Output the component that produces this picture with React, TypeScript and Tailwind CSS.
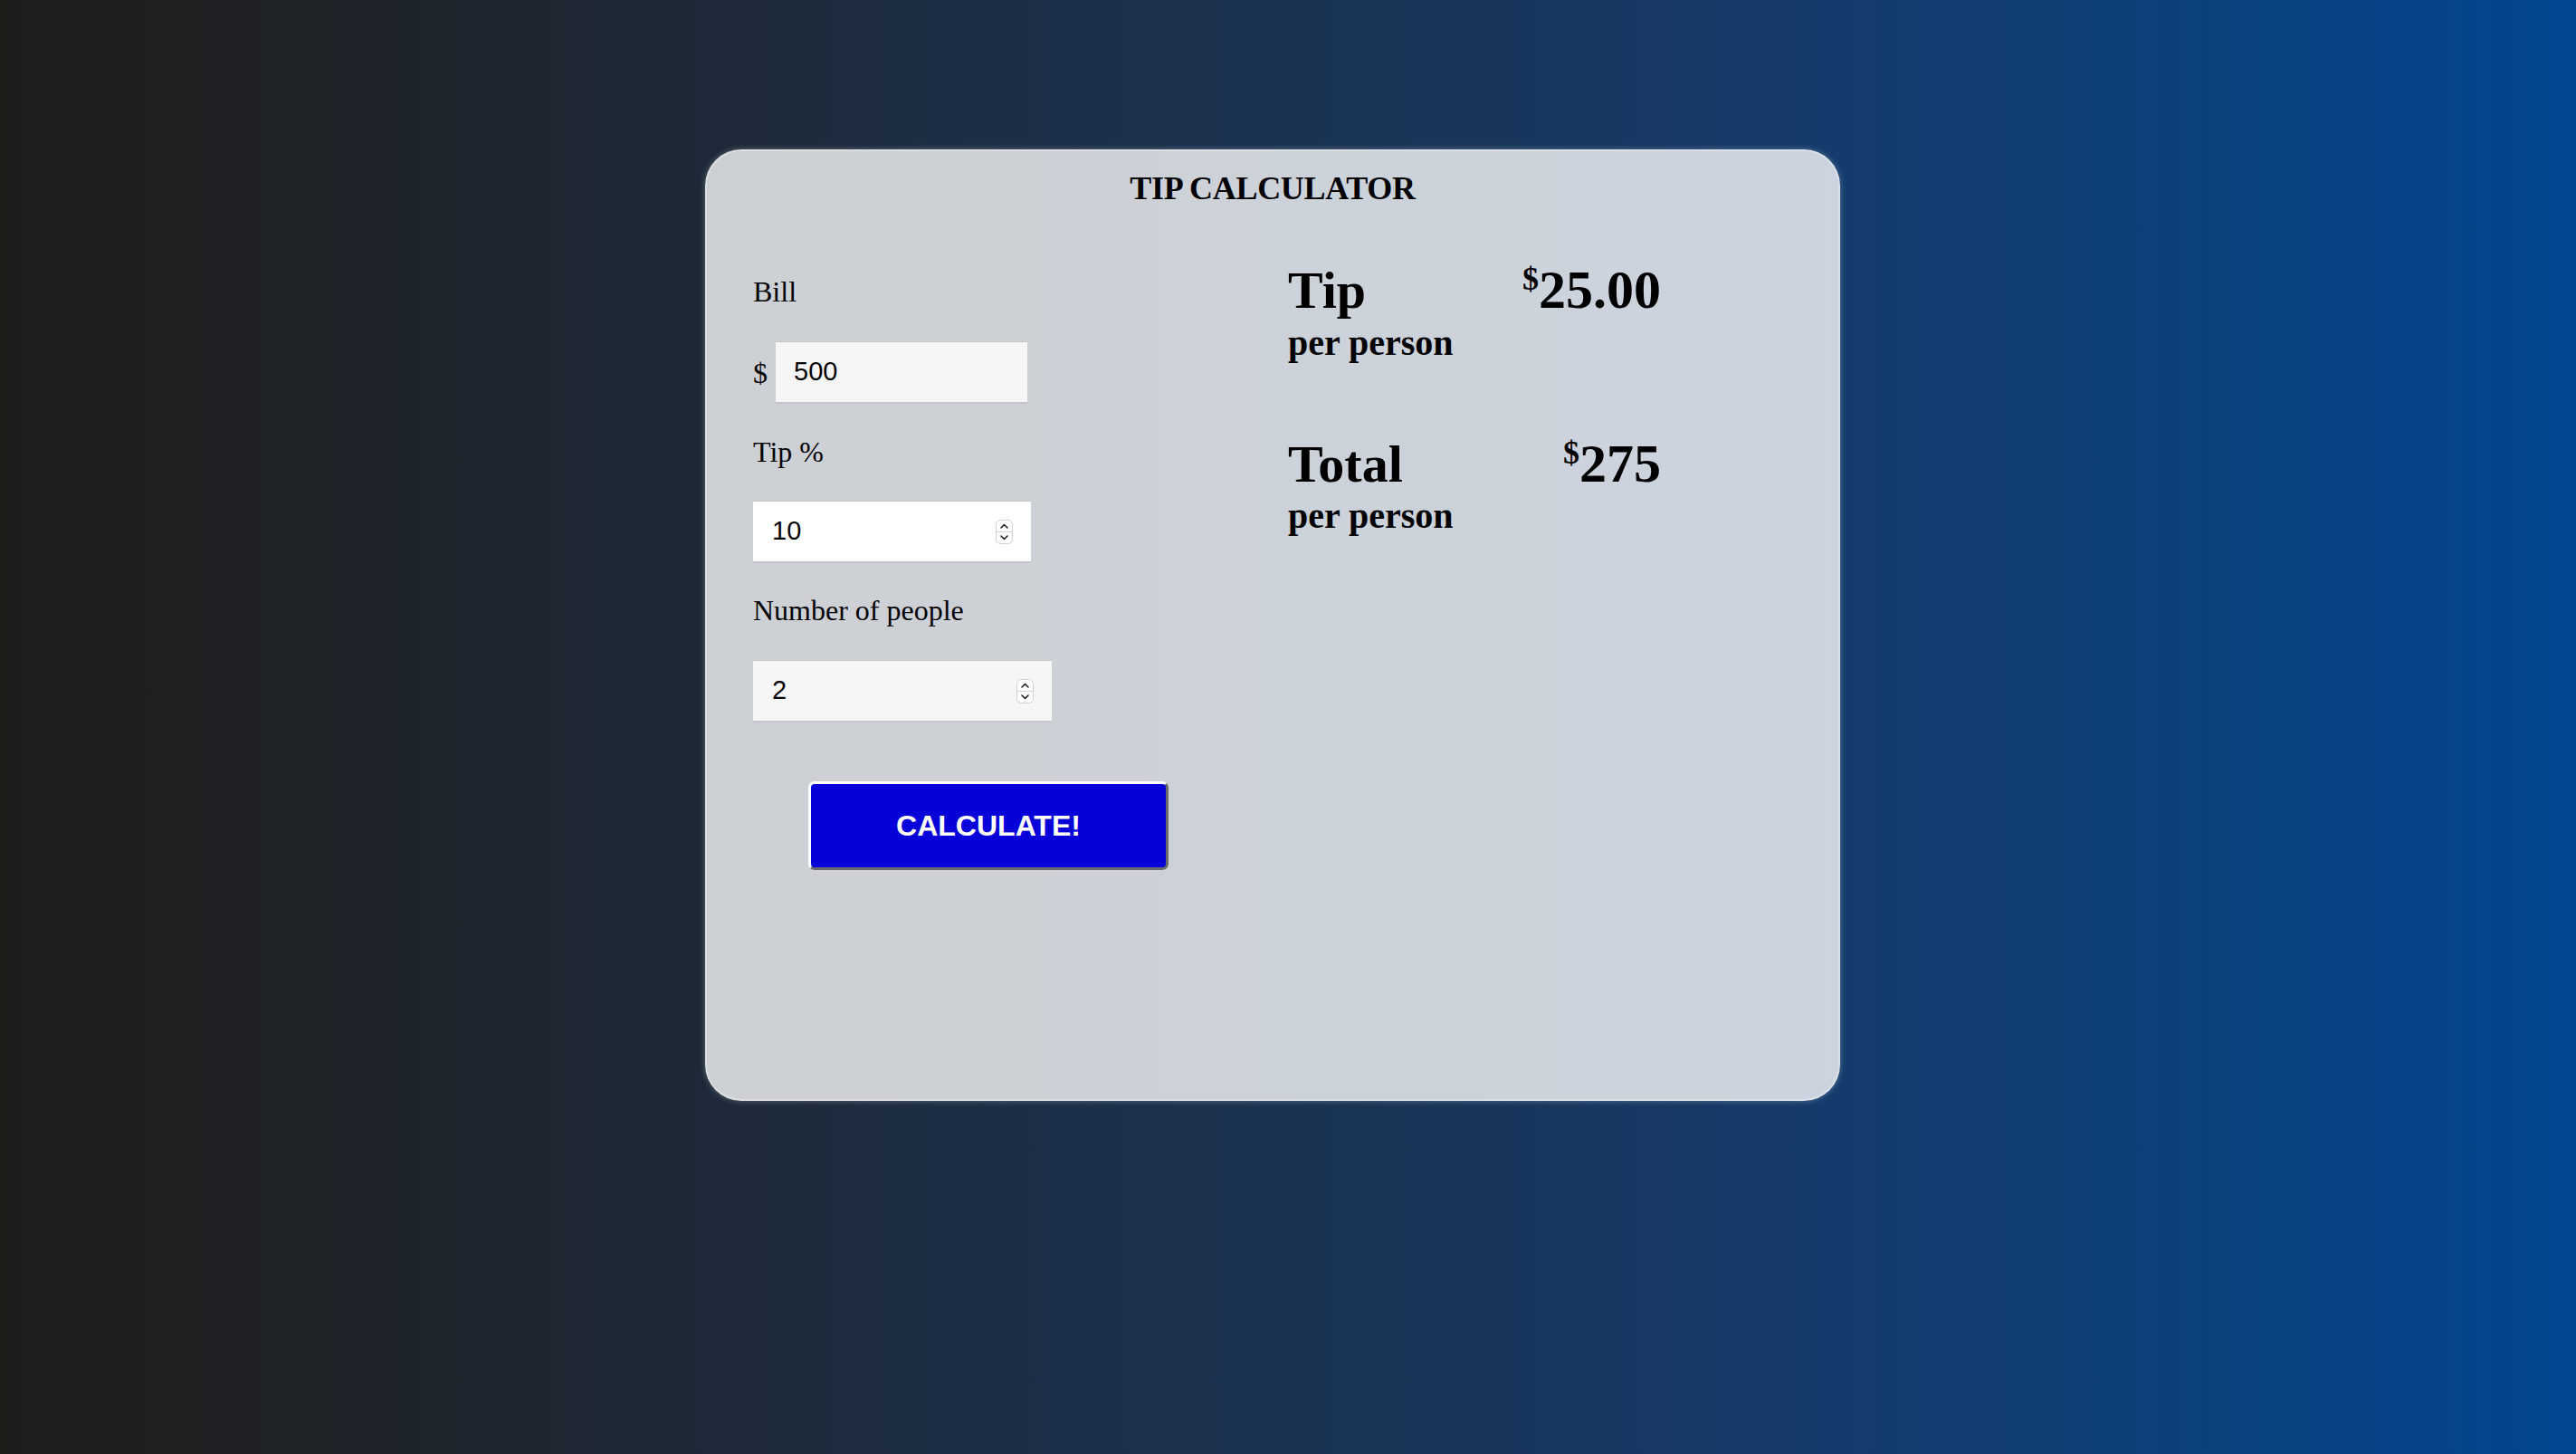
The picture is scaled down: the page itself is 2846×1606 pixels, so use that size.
import React from "react";

function Spinner() {
  return (
    <svg width="19" height="27" viewBox="0 0 19 27" className="shrink-0">
      <rect x="0.5" y="0.5" width="18" height="26" rx="5" fill="#ffffff" stroke="#cfcfcf" />
      <line x1="1" y1="13.5" x2="18" y2="13.5" stroke="#d6d6d6" />
      <path d="M6 9 L9.5 5.5 L13 9" fill="none" stroke="#222" strokeWidth="1.6" strokeLinecap="round" strokeLinejoin="round" />
      <path d="M6 18 L9.5 21.5 L13 18" fill="none" stroke="#222" strokeWidth="1.6" strokeLinecap="round" strokeLinejoin="round" />
    </svg>
  );
}

interface INumberFieldProps {
  value: string;
  width: string;
  tone: string;
}

function NumberField(props: INumberFieldProps) {
  const {value, width, tone} = props;
  return (
    <div className={`flex h-[69px] items-center border-t border-b-2 border-[#c3c5c8] pr-[20px] pl-[21px] ${width} ${tone}`}>
      <input
        defaultValue={value}
        className="w-full min-w-0 bg-transparent font-['Liberation_Sans',Arial,sans-serif] text-[29px] text-black outline-none"
      />
      <Spinner />
    </div>
  );
}

interface IResultRowProps {
  label: string;
  amount: string;
  first?: boolean;
}

function ResultRow(props: IResultRowProps) {
  const {label, amount, first = false} = props;
  return (
    <div className={first ? "mt-[58px]" : "mt-[78px]"}>
      <div className="flex h-[64px] items-baseline justify-between leading-[64px]">
        <span className="text-[58px] font-bold">{label}</span>
        <span className="text-[60px] font-bold">
          <span className="align-[20px] text-[36px] leading-none">$</span>
          {amount}
        </span>
      </div>
      <div className={`${first ? "mt-[4px]" : "mt-[3px]"} text-[40px] leading-[46px] font-bold`}>per person</div>
    </div>
  );
}

export default function App() {
  return (
    <div className="h-[1606px] w-full overflow-hidden bg-gradient-to-r from-[#1f1d1a] to-[#00468f] pt-[165px] font-['Liberation_Serif','Times_New_Roman',serif] text-black">
      <div className="ml-[779px] h-[1051px] w-[1254px] rounded-[40px] border-2 border-[rgba(255,255,255,0.3)] bg-[rgba(255,255,255,0.78)] shadow-[0_0_6px_rgba(255,255,255,0.3)]">
        <h3 className="pt-[19px] text-center text-[36px] leading-[44px] font-bold tracking-[-0.3px]">TIP CALCULATOR</h3>

        <div className="flex items-start pl-[51px]">
          {/* inputs */}
          <div className="flex w-[591px] flex-col items-start">
            <label className="mt-[72px] text-[32px] leading-[40px]">Bill</label>
            <div className="mt-[35px] flex items-center gap-[9px]">
              <span className="text-[32px] leading-[40px]">$</span>
              <div className="flex h-[69px] w-[278px] items-center border-t border-b-2 border-[#c3c5c8] bg-[#f6f6f6] pl-[20px]">
                <input
                  defaultValue="500"
                  className="w-full bg-transparent font-['Liberation_Sans',Arial,sans-serif] text-[29px] text-black outline-none"
                />
              </div>
            </div>

            <label className="mt-[33px] text-[32px] leading-[40px]">Tip %</label>
            <div className="mt-[34px]">
              <NumberField value="10" width="w-[307px]" tone="bg-white" />
            </div>

            <label className="mt-[32px] text-[32px] leading-[40px]">Number of people</label>
            <div className="mt-[35px]">
              <NumberField value="2" width="w-[330px]" tone="bg-[#f6f6f6]" />
            </div>

            <button className="mt-[65px] ml-[61px] h-[98px] w-[398px] rounded-[7px] border-[3px] border-t-white border-r-[#6a6a6a] border-b-[#6a6a6a] border-l-white bg-[#0700d9] font-['Liberation_Sans',Arial,sans-serif] text-[32px] font-bold text-white">
              CALCULATE!
            </button>
          </div>

          {/* results */}
          <div className="w-[412px]">
            <ResultRow label="Tip" amount="25.00" first />
            <ResultRow label="Total" amount="275" />
          </div>
        </div>
      </div>
    </div>
  );
}
